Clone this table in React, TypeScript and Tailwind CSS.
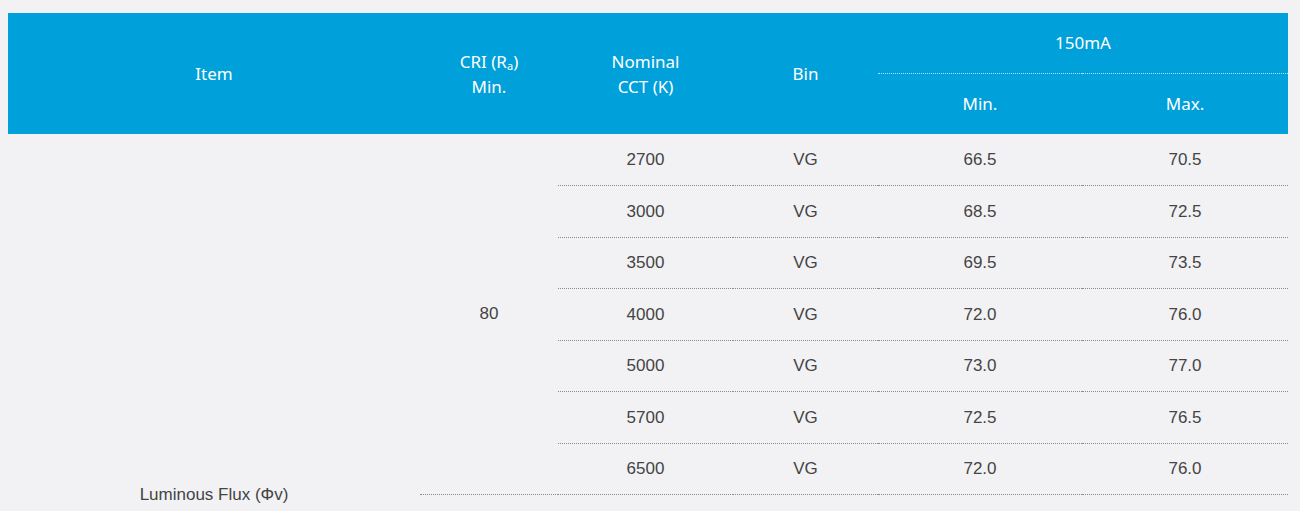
import React from "react"

const ROWS_80 = [
  { cct: "2700", bin: "VG", min: "66.5", max: "70.5" },
  { cct: "3000", bin: "VG", min: "68.5", max: "72.5" },
  { cct: "3500", bin: "VG", min: "69.5", max: "73.5" },
  { cct: "4000", bin: "VG", min: "72.0", max: "76.0" },
  { cct: "5000", bin: "VG", min: "73.0", max: "77.0" },
  { cct: "5700", bin: "VG", min: "72.5", max: "76.5" },
  { cct: "6500", bin: "VG", min: "72.0", max: "76.0" },
]

const HEAD = "font-normal text-white text-[17px] leading-[25px] text-center align-middle"
const CELL = "text-center align-middle border-b border-dotted border-[#8a8a8a]"

export default function App() {
  return (
    <div className="min-h-screen bg-[#f2f2f4] pt-[13px] pl-2">
      <table
        className="w-[1280px] table-fixed border-collapse text-[17px] text-[#444]"
        style={{ fontFamily: '"Liberation Sans", Arial, sans-serif' }}
      >
        <colgroup>
          <col className="w-[412px]" />
          <col className="w-[138px]" />
          <col className="w-[175px]" />
          <col className="w-[145px]" />
          <col className="w-[204px]" />
          <col className="w-[206px]" />
        </colgroup>
        <thead className="bg-[#00a0da]" style={{ fontFamily: '"Noto Sans", "Open Sans", sans-serif' }}>
          <tr className="h-[60px]">
            <th rowSpan={2} className={HEAD}>
              Item
            </th>
            <th rowSpan={2} className={HEAD}>
              CRI (R<sub className="text-[11px] leading-none">a</sub>)
              <br />
              Min.
            </th>
            <th rowSpan={2} className={HEAD}>
              Nominal
              <br />
              CCT (K)
            </th>
            <th rowSpan={2} className={HEAD}>
              Bin
            </th>
            <th colSpan={2} className={HEAD + " border-b border-dotted border-white/70"}>
              150mA
            </th>
          </tr>
          <tr className="h-[61px]">
            <th className={HEAD}>Min.</th>
            <th className={HEAD}>Max.</th>
          </tr>
        </thead>
        <tbody>
          {ROWS_80.map((r, i) => (
            <tr key={r.cct} className="h-[51.5px]">
              {i === 0 && (
                <td rowSpan={14} className="text-center align-middle">
                  Luminous Flux (Φv)
                </td>
              )}
              {i === 0 && (
                <td rowSpan={7} className={CELL}>
                  80
                </td>
              )}
              <td className={CELL}>{r.cct}</td>
              <td className={CELL}>{r.bin}</td>
              <td className={CELL}>{r.min}</td>
              <td className={CELL}>{r.max}</td>
            </tr>
          ))}
          {/* next CRI group continues below the fold */}
          {ROWS_80.map((r) => (
            <tr key={"next" + r.cct} className="h-[51.5px]">
              <td colSpan={5} />
            </tr>
          ))}
        </tbody>
      </table>
    </div>
  )
}
